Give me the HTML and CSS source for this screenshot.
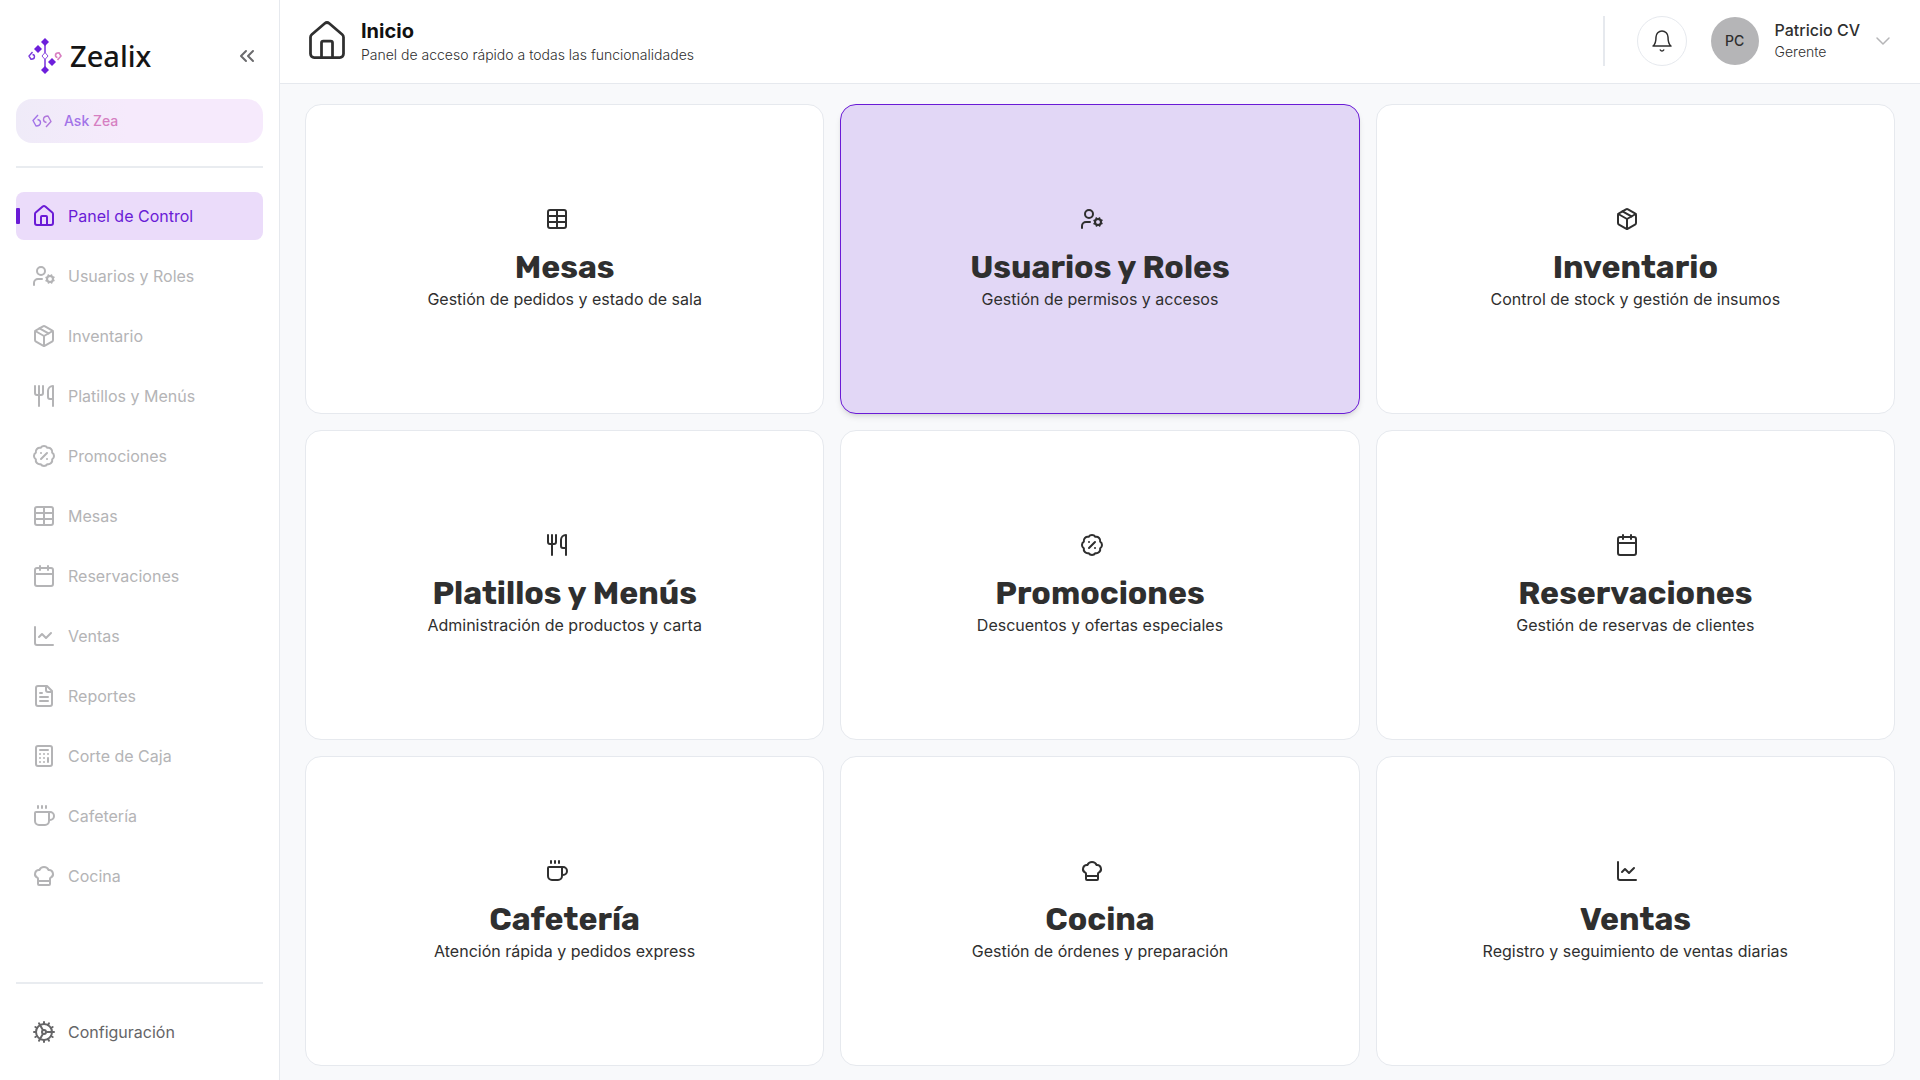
FILE: index.html
```html
<!DOCTYPE html>
<html lang="es">

<head>
    <meta charset="UTF-8">
    <meta name="viewport" content="width=device-width, initial-scale=1.0">
    <title>Zealix - Inicio</title>
    <link rel="stylesheet" href="styles.css">
</head>

<body>
    <!-- Iconos -->
    <svg class="sprite" aria-hidden="true">
        <symbol id="i-home" viewBox="0 0 24 24"><path d="M15 21v-8a1 1 0 0 0-1-1h-4a1 1 0 0 0-1 1v8"/><path d="M3 10a2 2 0 0 1 .709-1.528l7-5.999a2 2 0 0 1 2.582 0l7 5.999A2 2 0 0 1 21 10v9a2 2 0 0 1-2 2H5a2 2 0 0 1-2-2z"/></symbol>
        <symbol id="i-users" viewBox="0 0 24 24"><circle cx="18" cy="15" r="3"/><circle cx="9" cy="7" r="4"/><path d="M10 15H6a4 4 0 0 0-4 4v2"/><path d="m21.7 16.4-.9-.3M15.2 13.9l-.9-.3M16.6 18.7l.3-.9M19.1 12.2l.3-.9M19.6 18.7l-.4-1M16.8 12.3l-.4-1M14.3 16.6l1-.4M20.7 13.8l1-.4"/></symbol>
        <symbol id="i-box" viewBox="0 0 24 24"><path d="m7.5 4.27 9 5.15"/><path d="M21 8a2 2 0 0 0-1-1.73l-7-4a2 2 0 0 0-2 0l-7 4A2 2 0 0 0 3 8v8a2 2 0 0 0 1 1.73l7 4a2 2 0 0 0 2 0l7-4A2 2 0 0 0 21 16Z"/><path d="m3.3 7 8.7 5 8.7-5M12 22V12"/></symbol>
        <symbol id="i-food" viewBox="0 0 24 24"><path d="M3 2v7c0 1.1.9 2 2 2h4a2 2 0 0 0 2-2V2M7 2v20M21 15V2a5 5 0 0 0-5 5v6c0 1.1.9 2 2 2h3Zm0 0v7"/></symbol>
        <symbol id="i-promo" viewBox="0 0 24 24"><path d="M3.85 8.62a4 4 0 0 1 4.78-4.77 4 4 0 0 1 6.74 0 4 4 0 0 1 4.78 4.78 4 4 0 0 1 0 6.74 4 4 0 0 1-4.77 4.78 4 4 0 0 1-6.75 0 4 4 0 0 1-4.78-4.77 4 4 0 0 1 0-6.76Z"/><path d="m15 9-6 6M9 9h.01M15 15h.01"/></symbol>
        <symbol id="i-table" viewBox="0 0 24 24"><rect x="3" y="3" width="18" height="18" rx="2"/><path d="M12 3v18M3 9h18M3 15h18"/></symbol>
        <symbol id="i-calendar" viewBox="0 0 24 24"><rect x="3" y="4" width="18" height="18" rx="2"/><path d="M8 2v4M16 2v4M3 10h18"/></symbol>
        <symbol id="i-chart" viewBox="0 0 24 24"><path d="M3 3v16a2 2 0 0 0 2 2h16M19 9l-5 5-4-4-3 3"/></symbol>
        <symbol id="i-file" viewBox="0 0 24 24"><path d="M15 2H6a2 2 0 0 0-2 2v16a2 2 0 0 0 2 2h12a2 2 0 0 0 2-2V7Z"/><path d="M14 2v4a2 2 0 0 0 2 2h4M10 9H8M16 13H8M16 17H8"/></symbol>
        <symbol id="i-calc" viewBox="0 0 24 24"><rect x="4" y="2" width="16" height="20" rx="2"/><path d="M8 6h8M16 14v4M16 10h.01M12 10h.01M8 10h.01M12 14h.01M8 14h.01M12 18h.01M8 18h.01"/></symbol>
        <symbol id="i-coffee" viewBox="0 0 24 24"><path d="M6 2v2M10 2v2M14 2v2M16 8a1 1 0 0 1 1 1v8a4 4 0 0 1-4 4H7a4 4 0 0 1-4-4V9a1 1 0 0 1 1-1h14a4 4 0 1 1 0 8h-1"/></symbol>
        <symbol id="i-chef" viewBox="0 0 24 24"><path d="M17 21a1 1 0 0 0 1-1v-5.35c0-.457.316-.844.727-1.041a4 4 0 0 0-2.134-7.589 5 5 0 0 0-9.186 0 4 4 0 0 0-2.134 7.588c.411.198.727.585.727 1.041V20a1 1 0 0 0 1 1Z"/><path d="M6 17h12"/></symbol>
        <symbol id="i-cog" viewBox="0 0 24 24"><path d="M12 20a8 8 0 1 0 0-16 8 8 0 0 0 0 16Z"/><path d="M12 14a2 2 0 1 0 0-4 2 2 0 0 0 0 4ZM12 2v2M12 22v-2M17 20.66l-1-1.73M11 10.27 7 3.34M20.66 17l-1.73-1M3.34 7l1.73 1M14 12h8M2 12h2M20.66 7l-1.73 1M3.34 17l1.73-1M17 3.34l-1 1.73M11 13.73l-4 6.93"/></symbol>
        <symbol id="i-bell" viewBox="0 0 24 24"><path d="M6 8a6 6 0 0 1 12 0c0 7 3 9 3 9H3s3-2 3-9M10.3 21a1.94 1.94 0 0 0 3.4 0"/></symbol>
        <symbol id="i-down" viewBox="0 0 24 24"><path d="m6 9 6 6 6-6"/></symbol>
        <symbol id="i-left" viewBox="0 0 24 24"><path d="m11 17-5-5 5-5M18 17l-5-5 5-5"/></symbol>
    </svg>

    <div class="app">
        <aside class="sidebar">
            <div class="brand">
                <a href="#" class="logo">
                    <svg class="logo-mark" viewBox="0 0 36 36" aria-hidden="true">
                        <path d="M18 4v28" stroke="#9a63e4" stroke-width="2"/>
                        <path d="m18 0 4 4-4 4-4-4zM11 7l4 4-4 4-4-4zM25 20l4 4-4 4-4-4zM18 28l4 4-4 4-4-4z" fill="#6d1fdb"/>
                        <path d="m18 14.500 3 3.500-3 3.500-3-3.500z" fill="#fff" stroke="#8a4be0"/>
                        <path d="M5.500 14 2 18l2 3.200q3.500 0 3.500-2.500 0-2-2-2.200" fill="none" stroke="#7a38da" stroke-width="1.400"/>
                        <path d="M30.500 22 34 18l-2-3.200q-3.500 0-3.500 2.500 0 2 2 2.200" fill="none" stroke="#d87ec0" stroke-width="1.600"/>
                    </svg>
                    <span>Zealix</span>
                </a>
                <button class="collapse" type="button" aria-label="Contraer menú"><svg class="icon"><use href="#i-left"/></svg></button>
            </div>

            <button class="ask" type="button">
                <svg class="ask-icon" viewBox="0 0 20 14" fill="none" stroke="#a273e8" stroke-width="1.400" stroke-linejoin="round" aria-hidden="true">
                    <path d="M6 1 1 6.500 4 12q4.500 0 4.500-3.500 0-2.500-3-3"/>
                    <path d="M14 13l5-5.500L16 2q-4.500 0-4.500 3.500 0 2.500 3 3" stroke="#b077dc"/>
                </svg>
                <span>Ask <span class="zea">Zea</span></span>
            </button>

            <nav class="menu">
                <a href="#" class="active"><svg class="icon"><use href="#i-home"/></svg>Panel de Control</a>
                <a href="#"><svg class="icon"><use href="#i-users"/></svg>Usuarios y Roles</a>
                <a href="#"><svg class="icon"><use href="#i-box"/></svg>Inventario</a>
                <a href="#"><svg class="icon"><use href="#i-food"/></svg>Platillos y Menús</a>
                <a href="#"><svg class="icon"><use href="#i-promo"/></svg>Promociones</a>
                <a href="#"><svg class="icon"><use href="#i-table"/></svg>Mesas</a>
                <a href="#"><svg class="icon"><use href="#i-calendar"/></svg>Reservaciones</a>
                <a href="#"><svg class="icon"><use href="#i-chart"/></svg>Ventas</a>
                <a href="#"><svg class="icon"><use href="#i-file"/></svg>Reportes</a>
                <a href="#"><svg class="icon"><use href="#i-calc"/></svg>Corte de Caja</a>
                <a href="#"><svg class="icon"><use href="#i-coffee"/></svg>Cafetería</a>
                <a href="#"><svg class="icon"><use href="#i-chef"/></svg>Cocina</a>
            </nav>

            <div class="menu menu-bottom">
                <a href="#" class="config"><svg class="icon"><use href="#i-cog"/></svg>Configuración</a>
            </div>
        </aside>

        <div class="content">
            <header class="topbar">
                <svg class="icon page-icon"><use href="#i-home"/></svg>
                <div class="page-title">
                    <h1>Inicio</h1>
                    <p>Panel de acceso rápido a todas las funcionalidades</p>
                </div>
                <div class="separator"></div>
                <button class="bell" type="button" aria-label="Notificaciones"><svg class="icon"><use href="#i-bell"/></svg></button>
                <button class="user" type="button">
                    <span class="avatar">PC</span>
                    <span class="user-info">
                        <span class="user-name">Patricio CV</span>
                        <span class="user-role">Gerente</span>
                    </span>
                    <svg class="icon"><use href="#i-down"/></svg>
                </button>
            </header>

            <main class="cards">
                <a href="#" class="card">
                    <svg class="icon"><use href="#i-table"/></svg>
                    <h2>Mesas</h2>
                    <p>Gestión de pedidos y estado de sala</p>
                </a>
                <a href="#" class="card selected">
                    <svg class="icon"><use href="#i-users"/></svg>
                    <h2>Usuarios y Roles</h2>
                    <p>Gestión de permisos y accesos</p>
                </a>
                <a href="#" class="card">
                    <svg class="icon"><use href="#i-box"/></svg>
                    <h2>Inventario</h2>
                    <p>Control de stock y gestión de insumos</p>
                </a>
                <a href="#" class="card">
                    <svg class="icon"><use href="#i-food"/></svg>
                    <h2>Platillos y Menús</h2>
                    <p>Administración de productos y carta</p>
                </a>
                <a href="#" class="card">
                    <svg class="icon"><use href="#i-promo"/></svg>
                    <h2>Promociones</h2>
                    <p>Descuentos y ofertas especiales</p>
                </a>
                <a href="#" class="card">
                    <svg class="icon"><use href="#i-calendar"/></svg>
                    <h2>Reservaciones</h2>
                    <p>Gestión de reservas de clientes</p>
                </a>
                <a href="#" class="card">
                    <svg class="icon"><use href="#i-coffee"/></svg>
                    <h2>Cafetería</h2>
                    <p>Atención rápida y pedidos express</p>
                </a>
                <a href="#" class="card">
                    <svg class="icon"><use href="#i-chef"/></svg>
                    <h2>Cocina</h2>
                    <p>Gestión de órdenes y preparación</p>
                </a>
                <a href="#" class="card">
                    <svg class="icon"><use href="#i-chart"/></svg>
                    <h2>Ventas</h2>
                    <p>Registro y seguimiento de ventas diarias</p>
                </a>
            </main>
        </div>
    </div>
</body>

</html>
```
FILE: styles.css
```css
* {
    box-sizing: border-box;
}

body {
    font-family: Inter, sans-serif;
    font-size: 16px;
    line-height: 24px;
    margin: 0;
    color: #2f2f2f;
    background-color: #f8f9fb;
}

h1,
h2,
p {
    margin: 0;
}

a {
    color: inherit;
    text-decoration: none;
}

button {
    font: inherit;
    color: inherit;
    padding: 0;
    border: none;
    background: none;
    cursor: pointer;
}

.sprite {
    display: none;
}

.icon {
    width: 24px;
    height: 24px;
    flex-shrink: 0;
    fill: none;
    stroke: currentColor;
    stroke-width: 2;
    stroke-linecap: round;
    stroke-linejoin: round;
}

.app {
    display: flex;
    min-height: 100vh;
}

/* Barra lateral */
.sidebar {
    display: flex;
    flex-direction: column;
    width: 280px;
    flex-shrink: 0;
    padding: 32px 16px 24px;
    background-color: #fff;
    border-right: 1px solid #e6e9ee;
}

.brand {
    display: flex;
    align-items: center;
    justify-content: space-between;
    height: 48px;
    padding: 0 4px 0 11px;
}

.logo {
    display: flex;
    align-items: center;
    gap: 7px;
    font-family: "Noto Sans", sans-serif;
    font-size: 29px;
    font-weight: 500;
    color: #151515;
}

.logo-mark {
    width: 36px;
    height: 36px;
}

.collapse {
    display: flex;
    color: #6b6b6d;
}

.ask {
    display: flex;
    align-items: center;
    gap: 12px;
    height: 44px;
    margin-top: 19px;
    padding: 0 16px;
    border-radius: 16px;
    font-size: 14px;
    font-weight: 500;
    color: #a273e8;
    background: linear-gradient(90deg, #efebf8, #f6eafc 45%);
}

.ask-icon {
    width: 20px;
    height: 14px;
}

.zea {
    color: #d67fc2;
}

.menu {
    display: flex;
    flex-direction: column;
    gap: 12px;
    margin-top: 23px;
    padding-top: 24px;
    border-top: 2px solid #e9ecf0;
}

.menu a {
    display: flex;
    align-items: center;
    gap: 12px;
    height: 48px;
    padding: 0 16px;
    border-radius: 8px;
    color: #b4b4b6;
}

.menu .active {
    position: relative;
    color: #6a1bd6;
    background-color: #ebdcfa;
}

.menu .active::before {
    content: "";
    position: absolute;
    left: 0;
    width: 4px;
    height: 16px;
    border-radius: 1px;
    background-color: #6a1bd6;
}

.menu-bottom {
    margin-top: auto;
}

.menu .config {
    color: #656567;
}

/* Contenido */
.content {
    display: flex;
    flex-direction: column;
    flex: 1;
    min-width: 0;
}

.topbar {
    display: flex;
    align-items: center;
    height: 84px;
    padding: 0 25px 2px;
    background-color: #fff;
    border-bottom: 1px solid #e6e9ee;
}

.page-icon {
    width: 44px;
    height: 44px;
    margin-right: 12px;
    stroke-width: 1.5;
}

.page-title {
    flex: 1;
    padding-top: 4px;
}

.page-title h1 {
    font-size: 20px;
    font-weight: 700;
    line-height: 24px;
    color: #111;
}

.page-title p {
    font-size: 14px;
    font-weight: 300;
}

.separator {
    width: 2px;
    height: 50px;
    background-color: #e6e9ee;
}

.bell {
    display: flex;
    align-items: center;
    justify-content: center;
    width: 50px;
    height: 50px;
    margin: 0 24px 0 32px;
    border: 1px solid #e6e9ee;
    border-radius: 50%;
}

.bell .icon {
    stroke-width: 1.5;
}

.user {
    display: flex;
    align-items: center;
    text-align: left;
}

.avatar {
    width: 48px;
    margin-right: 16px;
    border-radius: 50%;
    font-size: 14px;
    font-weight: 500;
    line-height: 48px;
    text-align: center;
    background-color: #b5b5b7;
}

.user-info {
    display: flex;
    flex-direction: column;
    margin-right: 11px;
    line-height: 22px;
}

.user-name {
    font-weight: 500;
}

.user-role {
    font-size: 14px;
    font-weight: 300;
}

.user .icon {
    color: #b5b5b7;
    stroke-width: 1.5;
}

/* Tarjetas */
.cards {
    display: grid;
    grid-template-columns: repeat(3, 1fr);
    grid-auto-rows: 1fr;
    gap: 16px;
    flex: 1;
    padding: 20px 25px 14px;
}

.card {
    display: flex;
    flex-direction: column;
    align-items: center;
    justify-content: center;
    background-color: #fff;
    border: 1px solid #e6e9ee;
    border-radius: 16px;
    text-align: center;
}

.card .icon {
    margin: 0 16px 16px 0;
}

.card h2 {
    font-family: Rubik, Inter, sans-serif;
    font-size: 32px;
    font-weight: 700;
    line-height: 40px;
}

.selected {
    background-color: #e2d7f6;
    border-color: #6a1bd6;
    box-shadow: 0 4px 6px -1px rgba(0, 0, 0, 0.1), 0 2px 4px -2px rgba(0, 0, 0, 0.1);
}
```
